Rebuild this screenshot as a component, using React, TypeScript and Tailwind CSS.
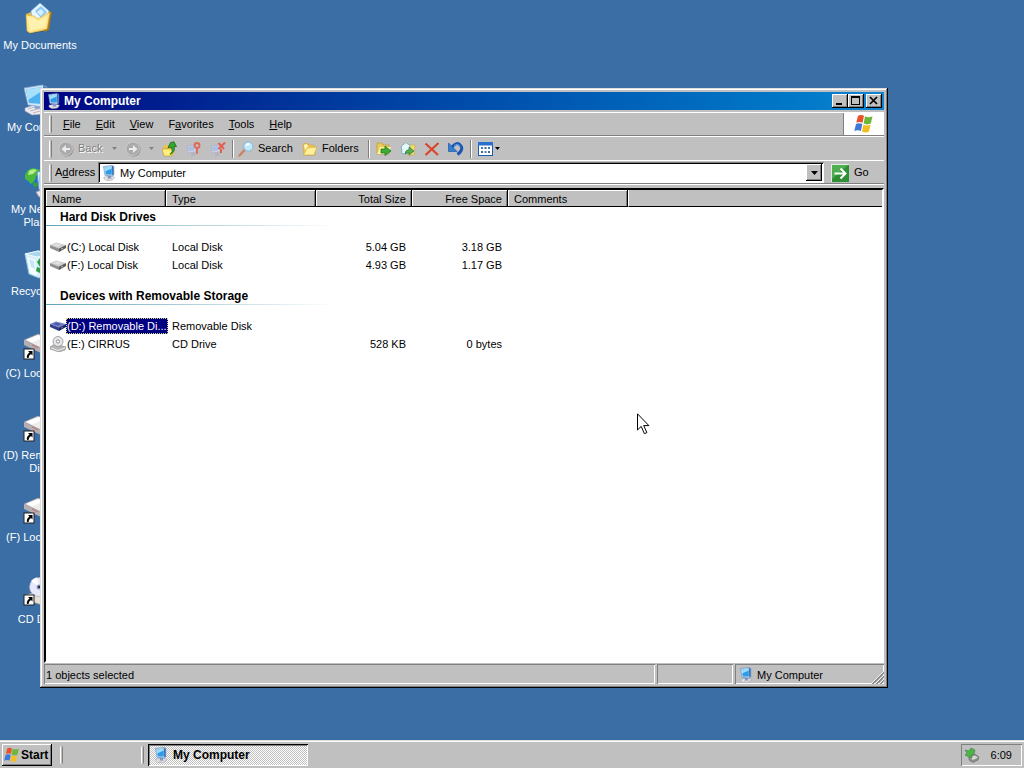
import React from "react";

const RAISED =
  "bg-[#c0c0c0] shadow-[inset_-1px_-1px_0_#000,inset_1px_1px_0_#fff,inset_-2px_-2px_0_#808080]";
const SUNKEN =
  "shadow-[inset_1px_1px_0_#808080,inset_-1px_-1px_0_#fff]";

type IconProps = { className?: string };

function ComputerIcon({ className = "size-4" }: IconProps) {
  return (
    <svg viewBox="0 0 16 16" className={`shrink-0 ${className}`} aria-hidden="true">
      <path d="M3 12.2 9 11l4.500 1.200L11.500 15 6 15.800 3 14z" fill="#e4e4ea" stroke="#9a9aae" strokeWidth=".5" />
      <path d="M6 14.200l5-1" stroke="#b98f96" strokeWidth=".6" />
      <path d="M6.500 10h3.500v3l-3 .5z" fill="#7c9cc4" />
      <path d="M2.500 1.500 11 .5l1.800 1v8.500l-1.500 1L4 10.500z" fill="#c9dff2" stroke="#5f86b5" strokeWidth=".6" />
      <path d="M3.600 2.400 10.800 1.600v7.800L4.900 9.600z" fill="#2f9ae8" />
      <path d="M3.600 2.400 10.800 1.600v2L4 6.500z" fill="#9cdcfb" />
      <path d="M11 .8l1.700.9v8l-1.500.9z" fill="#3a6fae" />
    </svg>
  );
}

function LargeComputerIcon() {
  return (
    <svg viewBox="0 0 32 32" className="size-8" aria-hidden="true">
      <path d="M1 24l12-4 14 3-7 7-12 1-7-4z" fill="#ecebf1" stroke="#a5a5b8" strokeWidth=".6" />
      <path d="M4 25l10-3M6 27l12-3M9 29l11-3" stroke="#bcaab4" strokeWidth=".9" />
      <path d="M10 20h9v4l-8 1z" fill="#7fa3ca" />
      <path d="M0 4 18 1l5 2v17l-4 3L4 21z" fill="#cfe5f6" stroke="#80a7cf" strokeWidth=".7" />
      <path d="M2 5.500 18 3v17L5 19z" fill="#4fb2f0" />
      <path d="M2 5.500 18 3v4L4 16z" fill="#a8e0fb" />
      <path d="M19 1.500l4 1.700V20l-4 2.500z" fill="#4f83bd" />
    </svg>
  );
}

function DocumentsIcon() {
  return (
    <svg viewBox="0 0 32 32" className="size-8" aria-hidden="true">
      <path d="M3 12l4-2 2 1 18-1 1 3-4 16-18 3-2-2z" fill="#35556d" opacity=".45" />
      <path d="M2 12l5-2 3 1 15 1-1 16-19 3z" fill="#e5b93f" />
      <path d="M7 9 16 1l9 8 2 3-9 9-10-5z" fill="#e6f5ff" stroke="#7fb5df" strokeWidth=".7" />
      <path d="M11 9l6-5 6 6-6 6z" fill="#8ccaf4" />
      <path d="M13 10l4-3 3 3-3 4z" fill="#d5f0ff" />
      <path d="M25 9l3 1-3 18-5 2 1-13z" fill="#a57a1c" />
      <path d="M2 13l8 1 4 3 12-7-3 17-17 4-3-2z" fill="#ffe68c" stroke="#d9ad3c" strokeWidth=".6" />
      <path d="M4 15l6 1 4 3 9-5-2 11-15 4z" fill="#fff1ae" />
    </svg>
  );
}

function NetworkIcon() {
  return (
    <svg viewBox="0 0 32 32" className="size-8" aria-hidden="true">
      <circle cx="10" cy="11" r="9.500" fill="#2770c4" />
      <path d="M1 9Q3 3 9 2l8 2v4l-5 2-1 4-4 4-3-3-3-2z" fill="#49b83b" />
      <path d="M5 5q4-3 8-1l-4 4-5 1z" fill="#b8ec8c" />
      <path d="M8 16l5 1 1 3-4 1z" fill="#37a23a" />
      <path d="M13 6 28 4v19l-13 1z" fill="#d7ebfa" stroke="#6a93c2" />
      <path d="M15 8l11-1v13l-10 1z" fill="#3ea6ee" />
      <path d="M15 8l11-1-10 9z" fill="#a9def9" />
      <path d="M12 26l8-3 9 3-4 4-10 1z" fill="#e9e6ee" stroke="#9c9cb4" />
    </svg>
  );
}

function RecycleIcon() {
  return (
    <svg viewBox="0 0 32 32" className="size-8" aria-hidden="true">
      <path d="M1 6 14 3l14 3-5 21-8 3-10-4z" fill="#d9f0f8" stroke="#8fc3dc" />
      <path d="M1 6l12 3 15-3-14-3z" fill="#a5d8ec" stroke="#f2fbff" />
      <path d="M3 9l8 3 2 16-7-3z" fill="#f6fdff" />
      <path d="M5 11l5 2 1 8-4-2z" fill="#c4e8f8" />
      <path d="M13 14l3-4 4 3-2 2 2 3-4 1zM13 19l3 1v5l-4-2z" fill="#2ea043" />
      <path d="M20 15l4 3-3 6-3-3z" fill="#3fb950" />
    </svg>
  );
}

function ShortcutArrow() {
  return (
    <>
      <rect x="0" y="19" width="10" height="10" fill="#fff" stroke="#222" strokeWidth="1" />
      <path d="M4 21h4.500v4.500L7 24Q4.500 25.500 4.500 28H3Q2 25 5.500 22.500z" fill="#000" />
    </>
  );
}

function DriveShortcutIcon() {
  return (
    <svg viewBox="0 0 32 32" className="size-8 overflow-visible" aria-hidden="true">
      <path d="M0 10 14 4l17 5-14 9z" fill="#efecec" stroke="#8c8791" strokeWidth=".6" />
      <path d="M0 10v5l17 8v-5z" fill="#b7aeb2" />
      <path d="M17 18l14-9v5l-14 9z" fill="#817c86" />
      <path d="M3 9.500l11-4 6 2-12 5z" fill="#fff" />
      <path d="M8 15l6 3" stroke="#c0706a" strokeWidth="1" />
      <ShortcutArrow />
    </svg>
  );
}

function DiscShortcutIcon() {
  return (
    <svg viewBox="0 0 32 32" className="size-8 overflow-visible" aria-hidden="true">
      <path d="M2 19l12-4 16 4-12 10-16-5z" fill="#e5e1d4" stroke="#979287" strokeWidth=".6" />
      <path d="M18 24l12-5v4l-12 7z" fill="#a9a498" />
      <circle cx="15" cy="11" r="9.500" fill="#e8e8fb" stroke="#a5a8cc" strokeWidth=".7" />
      <path d="M15 11 7 5a10 10 0 0 1 6-3.500z" fill="#fff" />
      <path d="M15 11l8 5a9.500 9.500 0 0 1-6 4z" fill="#cfc6ee" />
      <circle cx="15" cy="11" r="2.500" fill="#8d9bc2" />
      <circle cx="15" cy="11" r="1.200" fill="#1e2b52" />
      <ShortcutArrow />
    </svg>
  );
}

function FlagIcon({ className = "size-5" }: IconProps) {
  return (
    <svg viewBox="0 0 20 20" className={`shrink-0 ${className}`} aria-hidden="true">
      <path d="M4 1.800Q7 0 10 1.800L8.600 8.800Q5.800 7 2.300 8.800z" fill="#e8542a" />
      <path d="M11 2.300q3.500 1.700 7.500 0L16.800 9.600q-3.800 1.600-7.100 0z" fill="#6cb63a" />
      <path d="M2 10q3.200-1.700 6.300 0L6.900 17q-3-1.700-6.600 0z" fill="#3f78d8" />
      <path d="M9.400 10.600q3.300 1.700 7.200 0L15 17.600q-3.800 1.700-7 0z" fill="#f4bd22" />
    </svg>
  );
}

function RoundArrow({ flip = false }: { flip?: boolean }) {
  return (
    <svg viewBox="0 0 16 16" className="size-4 shrink-0" aria-hidden="true">
      <circle cx="8.500" cy="8.500" r="7" fill="#8c8c8c" />
      <circle cx="7.700" cy="7.700" r="6.800" fill="#aaa" stroke="#d8d8d8" strokeWidth=".7" />
      <path
        d={flip ? "M4 7h4V4l4.500 4L8 12V9H4z" : "M12 7H8V4L3.500 8 8 12V9h4z"}
        fill="#ececec"
      />
    </svg>
  );
}

function UpIcon() {
  return (
    <svg viewBox="0 0 16 16" className="size-4 shrink-0" aria-hidden="true">
      <path d="M1 6l1-2h4l1 2h5v8l-9 1z" fill="#e9c44c" />
      <path d="M0 8h10l1.500 1-2 6H2z" fill="#fff07a" stroke="#b9952b" strokeWidth=".6" />
      <path d="M8 13.500q3.500-3 1.500-7H6L8.500 1.500 12 .8l2.500 4.700h-2.300q1.300 5.500-4.200 8z" fill="#36a52c" stroke="#155f14" strokeWidth=".7" />
    </svg>
  );
}

function MapDriveIcon({ remove = false }: { remove?: boolean }) {
  return (
    <svg viewBox="0 0 16 16" className="size-4 shrink-0" aria-hidden="true">
      <path d="M1 5l9-1v7l-8 1z" fill="#c9cfe0" stroke="#a7abc0" strokeWidth=".6" />
      <path d="M2 6l6-.8v4L3 10z" fill="#a9bfe4" />
      <path d="M5 12h4v3H5z" fill="#b7b3be" />
      {remove ? (
        <path d="M8.500 2l5.500 6m1-6.500L8.500 8M11 8v4" stroke="#e35d4e" strokeWidth="2" />
      ) : (
        <path d="M11 13V7.500M8.500 4.500a2.500 2.500 0 1 0 5 0 2.500 2.500 0 1 0-5 0" fill="none" stroke="#df6958" strokeWidth="1.800" />
      )}
    </svg>
  );
}

function SearchIcon() {
  return (
    <svg viewBox="0 0 16 16" className="size-4 shrink-0" aria-hidden="true">
      <path d="M1.500 14.500 7 8.500" stroke="#c98264" strokeWidth="2.400" strokeLinecap="round" />
      <circle cx="10.300" cy="5.500" r="4.700" fill="#bfe8fb" stroke="#86b5d6" />
      <path d="M7.500 5q.5-3 3.300-3l1 2z" fill="#fff" />
    </svg>
  );
}

function FolderIcon() {
  return (
    <svg viewBox="0 0 16 16" className="size-4 shrink-0" aria-hidden="true">
      <path d="M1 3l4-1 2 2h5l1 3v7H2z" fill="#f0c850" stroke="#c49b32" strokeWidth=".5" />
      <path d="M1.500 14 5 7l10-1-3 8z" fill="#fff09a" stroke="#cfa63b" strokeWidth=".6" />
      <path d="M2 4l2.500-1L6 5.500 3 9z" fill="#fff7be" />
    </svg>
  );
}

function MoveToIcon() {
  return (
    <svg viewBox="0 0 16 16" className="size-4 shrink-0" aria-hidden="true">
      <path d="M1 2h5l1 2h6v9H1z" fill="#eccb50" stroke="#b8912c" strokeWidth=".6" />
      <path d="M1 13 4 6h11l-3 7z" fill="#fff19a" />
      <path d="M5 8h4V5l6 5-6 4.500V12H5z" fill="#3dac36" stroke="#17691b" strokeWidth=".7" />
    </svg>
  );
}

function CopyToIcon() {
  return (
    <svg viewBox="0 0 16 16" className="size-4 shrink-0" aria-hidden="true">
      <path d="M8 4h7l-1 10H8z" fill="#f5dd66" stroke="#c6a23a" strokeWidth=".5" />
      <path d="M1.500 5 6 1.500l4 3V12l-8 1z" fill="#e8f8fa" stroke="#71aab3" strokeWidth=".8" />
      <path d="M5 13q0-4 4-4.500V6l5 4-5 4v-2.500Q7 11.500 5 13z" fill="#55ae50" stroke="#21712a" strokeWidth=".6" />
    </svg>
  );
}

function DeleteIcon() {
  return (
    <svg viewBox="0 0 16 16" className="size-4 shrink-0" aria-hidden="true">
      <path d="M1.500 2.500 14 14M14.500 2 1.500 14" stroke="#d8452c" strokeWidth="2.200" />
    </svg>
  );
}

function UndoIcon() {
  return (
    <svg viewBox="0 0 16 16" className="size-4 shrink-0" aria-hidden="true">
      <path d="M3 7.500Q9-1 13 5q2.500 4-3.500 8.500" fill="none" stroke="#1b55b4" strokeWidth="3" />
      <path d="M.5 2v8.500H9z" fill="#2f7fd8" stroke="#174b9c" strokeWidth=".6" />
      <path d="M6 5q4-3.500 6 .5" fill="none" stroke="#5ba7ef" />
    </svg>
  );
}

function ViewsIcon() {
  return (
    <svg viewBox="0 0 16 16" className="size-4 shrink-0" aria-hidden="true">
      <rect x=".5" y="1.500" width="14" height="13" fill="#fff" stroke="#1d5cb5" />
      <path d="M0 1h15v3.500H0z" fill="#2a6fce" />
      <path d="M3 6h2v2H3zM10 6h2v2h-2zM6.500 10h2v2h-2z" fill="#3579c9" />
      <path d="M6.500 6h2v2h-2zM3 10h2v2H3zM10 10h2v2h-2z" fill="#52657f" />
    </svg>
  );
}

function GoIcon() {
  return (
    <svg viewBox="0 0 18 18" className="size-[18px] shrink-0" aria-hidden="true">
      <rect width="18" height="18" fill="#e2f2e0" />
      <rect x="1" y="1" width="17" height="17" fill="#2f8f35" />
      <path d="M1 1h16L1 15z" fill="#4fae50" />
      <path d="M3.500 9.500h10M9.500 4.500l5 5-5 5" fill="none" stroke="#fff" strokeWidth="2" />
    </svg>
  );
}

function DiskIcon({ selected = false }: { selected?: boolean }) {
  return (
    <svg viewBox="0 0 16 16" className="size-4 shrink-0" aria-hidden="true">
      <path d="M0 6 6 3.500l10 2.500-7 3.500z" fill={selected ? "#7480c8" : "#d0d0d0"} />
      <path d="M0 6v3l9 4V9.500z" fill={selected ? "#333f8b" : "#909090"} />
      <path d="M9 9.500 16 6v3l-7 4z" fill={selected ? "#1c2461" : "#5a5a5a"} />
      <path d="M3 6l3.500-1.300L11 6 8 7.500z" fill={selected ? "#4858a4" : "#e3e3e3"} />
      <path d="M11 10.200l2-1" stroke={selected ? "#6875bb" : "#b8c8b8"} />
    </svg>
  );
}

function DiscIcon() {
  return (
    <svg viewBox="0 0 16 16" className="size-4 shrink-0" aria-hidden="true">
      <path d="M0 11l5-3 11 3-1 3-6 2-9-3z" fill="#b6b6b6" stroke="#777" strokeWidth=".5" />
      <path d="M1 12l7 2.500L15 12" fill="none" stroke="#eee" />
      <circle cx="8" cy="5.500" r="5" fill="#e6e6ea" stroke="#8f8f96" strokeWidth=".8" />
      <circle cx="8" cy="5.500" r="1.600" fill="#fff" stroke="#777" strokeWidth=".8" />
    </svg>
  );
}

function RemoveHardwareIcon() {
  return (
    <svg viewBox="0 0 16 16" className="size-4 shrink-0" aria-hidden="true">
      <path d="M5 10l6-3 4 3-1 3-5 2.500L5 13z" fill="#8b908b" stroke="#555" strokeWidth=".5" />
      <path d="M6 10.500l5-2 3 2-5 2.500z" fill="#d4d8d4" />
      <path d="M1 3l4 1 2-3 4 2-1 4-3 1 1 3-3-1-4-2 2-2z" fill="#4fb248" stroke="#2a7d2c" strokeWidth=".5" />
    </svg>
  );
}

function DownArrow({ muted = false }: { muted?: boolean }) {
  return (
    <svg viewBox="0 0 5 3" className="h-[3px] w-[5px] shrink-0" aria-hidden="true">
      <path d="M0 0h5L2.500 3z" fill={muted ? "#808080" : "#000"} />
    </svg>
  );
}

function Grip() {
  return <div className="h-[18px] w-[3px] shrink-0 border-y border-l border-r border-l-white border-r-[#808080] border-y-[#c0c0c0]" />;
}

function Separator() {
  return <div className="h-[18px] w-[2px] shrink-0 border-l border-r border-l-[#808080] border-r-white" />;
}

const shortcuts: { label: string; icon: React.ReactNode }[] = [
  { label: "My Documents", icon: <DocumentsIcon /> },
  { label: "My Computer", icon: <LargeComputerIcon /> },
  { label: "My Network Places", icon: <NetworkIcon /> },
  { label: "Recycle Bin", icon: <RecycleIcon /> },
  { label: "(C) Local Disk", icon: <DriveShortcutIcon /> },
  { label: "(D) Removable Disk", icon: <DriveShortcutIcon /> },
  { label: "(F) Local Disk", icon: <DriveShortcutIcon /> },
  { label: "CD Drive", icon: <DiscShortcutIcon /> },
];

const menus = [
  ["", "F", "ile"],
  ["", "E", "dit"],
  ["", "V", "iew"],
  ["F", "a", "vorites"],
  ["", "T", "ools"],
  ["", "H", "elp"],
];

type Drive = { name: string; type: string; size: string; free: string; icon: React.ReactNode; selected?: boolean };

const hardDisks: Drive[] = [
  { name: "(C:) Local Disk", type: "Local Disk", size: "5.04 GB", free: "3.18 GB", icon: <DiskIcon /> },
  { name: "(F:) Local Disk", type: "Local Disk", size: "4.93 GB", free: "1.17 GB", icon: <DiskIcon /> },
];

const removable: Drive[] = [
  { name: "(D:) Removable Di...", type: "Removable Disk", size: "", free: "", icon: <DiskIcon selected />, selected: true },
  { name: "(E:) CIRRUS", type: "CD Drive", size: "528 KB", free: "0 bytes", icon: <DiscIcon /> },
];

function GroupRow({ title, first = false }: { title: string; first?: boolean }) {
  return (
    <tr>
      <th colSpan={6} scope="colgroup" className="p-0 pb-3 text-left font-bold">
        <div className={`flex items-end ${first ? "h-[18px]" : "h-[30px]"}`}>
          <span className="pl-[14px] text-[12px] leading-4">{title}</span>
        </div>
        <div className="h-px w-[290px] bg-linear-to-r from-[#5fa3b8] to-white" />
      </th>
    </tr>
  );
}

function DriveRow({ drive }: { drive: Drive }) {
  return (
    <tr className="h-[18px]">
      <td className="p-0 pl-1">
        <div className="flex h-[18px] items-center">
          {drive.icon}
          <span
            className={`h-4 whitespace-nowrap border border-dotted leading-[14px] ${
              drive.selected ? "grow border-[#d8d878] bg-[#000080] text-white" : "border-transparent"
            }`}
          >
            {drive.name}
          </span>
        </div>
      </td>
      <td className="p-0 pl-[6px]">{drive.type}</td>
      <td className="p-0 pr-[6px] text-right">{drive.size}</td>
      <td className="p-0 pr-[6px] text-right">{drive.free}</td>
      <td className="p-0" />
      <td className="p-0" />
    </tr>
  );
}

function DriveTable() {
  const head =
    "h-[17px] bg-[#c0c0c0] p-0 px-[6px] font-normal shadow-[inset_-1px_-1px_0_#000,inset_1px_1px_0_#fff,inset_-2px_0_0_#808080]";
  return (
    <table className="w-full table-fixed border-separate border-spacing-0 text-black">
      <colgroup>
        <col className="w-[120px]" />
        <col className="w-[150px]" />
        <col className="w-[96px]" />
        <col className="w-[96px]" />
        <col className="w-[120px]" />
        <col />
      </colgroup>
      <thead>
        <tr className="leading-4">
          <th className={`${head} text-left`}>Name</th>
          <th className={`${head} text-left`}>Type</th>
          <th className={`${head} text-right`}>Total Size</th>
          <th className={`${head} text-right`}>Free Space</th>
          <th className={`${head} text-left`}>Comments</th>
          <td className="h-[17px] border-b border-l border-b-black border-l-white bg-[#c0c0c0] p-0" />
        </tr>
      </thead>
      <tbody>
        <GroupRow title="Hard Disk Drives" first />
        {hardDisks.map((d) => (
          <DriveRow key={d.name} drive={d} />
        ))}
        <GroupRow title="Devices with Removable Storage" />
        {removable.map((d) => (
          <DriveRow key={d.name} drive={d} />
        ))}
      </tbody>
    </table>
  );
}

function TitleBar() {
  const button = `flex h-[14px] w-4 items-center justify-center ${RAISED}`;
  return (
    <header className="flex h-[18px] shrink-0 items-center bg-linear-to-r from-[#000084] to-[#1084d0] pl-[2px] pr-[2px]">
      <ComputerIcon />
      <h1 className="grow pl-[2px] text-[12px] font-bold text-white">My Computer</h1>
      <button type="button" aria-label="Minimize" className={button}>
        <svg viewBox="0 0 16 14" className="h-[14px] w-4"><path d="M4 9h6v2H4z" /></svg>
      </button>
      <button type="button" aria-label="Maximize" className={button}>
        <svg viewBox="0 0 16 14" className="h-[14px] w-4"><path d="M3 2h9v9H3zM4 4v6h7V4z" fillRule="evenodd" /></svg>
      </button>
      <button type="button" aria-label="Close" className={`ml-[2px] ${button}`}>
        <svg viewBox="0 0 16 14" className="h-[14px] w-4"><path d="M4 3l7 7M11 3l-7 7" stroke="#000" strokeWidth="1.700" /></svg>
      </button>
    </header>
  );
}

function MenuBar() {
  return (
    <nav className="mt-[2px] flex h-6 shrink-0 border-y border-b-[#808080] border-t-white">
      <div className="flex grow items-center border-r border-[#808080] pl-[5px]">
        <Grip />
        <div className="flex gap-px pl-1">
          {menus.map(([before, key, after]) => (
            <button type="button" key={key} className="px-[7px]">
              {before}
              <span className="underline">{key}</span>
              {after}
            </button>
          ))}
        </div>
      </div>
      <div className="flex w-10 items-center justify-center bg-white">
        <FlagIcon />
      </div>
    </nav>
  );
}

function ToolBar() {
  return (
    <div role="toolbar" className="flex h-6 shrink-0 items-center border-t border-white pl-[5px]">
      <Grip />
      <button type="button" disabled className="ml-[6px] flex w-[46px] items-center gap-1 text-[#808080] [text-shadow:1px_1px_0_#fff]">
        <RoundArrow />
        Back
      </button>
      <button type="button" disabled aria-label="Back history" className="ml-2 flex"><DownArrow muted /></button>
      <button type="button" disabled aria-label="Forward" className="ml-2 flex"><RoundArrow flip /></button>
      <button type="button" disabled aria-label="Forward history" className="ml-2 flex"><DownArrow muted /></button>
      <div className="ml-2 flex gap-2">
        <button type="button" aria-label="Up"><UpIcon /></button>
        <button type="button" aria-label="Map network drive"><MapDriveIcon /></button>
        <button type="button" aria-label="Disconnect network drive"><MapDriveIcon remove /></button>
      </div>
      <div className="ml-[6px] flex"><Separator /></div>
      <button type="button" className="ml-1 flex w-[60px] items-center gap-1"><SearchIcon />Search</button>
      <button type="button" className="ml-1 flex w-[60px] items-center gap-1"><FolderIcon />Folders</button>
      <div className="ml-[6px] flex"><Separator /></div>
      <div className="ml-[6px] flex gap-2">
        <button type="button" aria-label="Move to"><MoveToIcon /></button>
        <button type="button" aria-label="Copy to"><CopyToIcon /></button>
        <button type="button" aria-label="Delete"><DeleteIcon /></button>
        <button type="button" aria-label="Undo"><UndoIcon /></button>
      </div>
      <div className="ml-[6px] flex"><Separator /></div>
      <button type="button" aria-label="Views" className="ml-[6px] flex items-center gap-[1px]"><ViewsIcon /><DownArrow /></button>
    </div>
  );
}

function AddressBar() {
  return (
    <div className="flex h-[25px] shrink-0 items-center border-y border-b-white border-t-white pl-[5px] shadow-[inset_0_-1px_0_#808080]">
      <Grip />
      <label htmlFor="address" className="w-[46px] shrink-0 pl-[3px]">
        A<span className="underline">d</span>dress
      </label>
      <div className="flex h-[21px] min-w-0 grow items-center bg-white p-[2px] pl-[3px] shadow-[inset_1px_1px_0_#808080,inset_-1px_-1px_0_#fff,inset_2px_2px_0_#000]">
        <ComputerIcon />
        <input id="address" type="text" defaultValue="My Computer" className="h-4 min-w-0 grow bg-transparent pl-[3px] outline-none" />
        <button type="button" aria-label="Address history" className={`flex h-[17px] w-4 items-center justify-center ${RAISED}`}>
          <svg viewBox="0 0 7 4" className="h-1 w-[7px]" aria-hidden="true"><path d="M0 0h7L3.500 4z" /></svg>
        </button>
      </div>
      <button type="button" className="flex w-[60px] shrink-0 items-center gap-[5px] pl-[7px]">
        <GoIcon />
        Go
      </button>
    </div>
  );
}

function StatusBar() {
  const pane = `flex h-5 items-center pt-[2px] ${SUNKEN}`;
  return (
    <footer className="mt-[1px] flex h-5 shrink-0 gap-[2px]">
      <div className={`${pane} grow pl-[2px]`}>1 objects selected</div>
      <div className={`${pane} w-[76px]`} />
      <div className={`${pane} w-[149px] justify-between pl-[3px]`}>
        <div className="flex items-center gap-[3px]">
          <ComputerIcon />
          My Computer
        </div>
        <svg viewBox="0 0 13 13" className="size-[13px] self-end" aria-hidden="true">
          <path d="M0 13 13 0M4 13l9-9M8 13l5-5" stroke="#fff" />
          <path d="M1 13.500 13.500 1M5 13.500l8.500-8.500M9 13.500l4.500-4.500" stroke="#808080" strokeWidth="1.400" />
        </svg>
      </div>
    </footer>
  );
}

function ExplorerWindow() {
  return (
    <section
      aria-label="My Computer"
      className="absolute bottom-20 left-10 right-[136px] top-[88px] flex flex-col bg-[#c0c0c0] p-1 shadow-[inset_-1px_-1px_0_#000,inset_1px_1px_0_#dcdcdc,inset_-2px_-2px_0_#808080,inset_2px_2px_0_#fff]"
    >
      <TitleBar />
      <MenuBar />
      <ToolBar />
      <AddressBar />
      <main className="mt-[3px] min-h-0 grow overflow-hidden border-2 border-b-white border-l-black border-r-white border-t-black bg-white">
        <DriveTable />
      </main>
      <StatusBar />
    </section>
  );
}

function Taskbar() {
  return (
    <footer className="flex h-7 shrink-0 items-center bg-[#c0c0c0] px-[2px] pt-[2px] shadow-[inset_0_1px_0_#dcdcdc,inset_0_2px_0_#fff]">
      <button type="button" className={`flex h-[22px] w-[50px] items-center gap-[1px] pl-[2px] text-[12px] font-bold ${RAISED}`}>
        <FlagIcon className="size-4" />
        Start
      </button>
      <div className="ml-2 flex grow items-center">
        <Grip />
        <div className="w-[78px]" />
        <Grip />
        <button
          type="button"
          className="ml-1 flex h-[22px] w-40 items-center gap-1 bg-[conic-gradient(#fff_25%,#c0c0c0_0_50%,#fff_0_75%,#c0c0c0_0)] bg-[length:2px_2px] pl-[5px] text-[12px] font-bold shadow-[inset_1px_1px_0_#000,inset_-1px_-1px_0_#fff,inset_2px_2px_0_#808080]"
        >
          <ComputerIcon />
          My Computer
        </button>
      </div>
      <div className={`flex h-[22px] w-[61px] items-center justify-between pl-[3px] pr-[10px] ${SUNKEN}`}>
        <RemoveHardwareIcon />
        <time>6:09</time>
      </div>
    </footer>
  );
}

function Pointer() {
  return (
    <svg viewBox="0 0 13 22" className="pointer-events-none absolute left-[637px] top-[413px] h-[22px] w-[13px]" aria-hidden="true">
      <path d="M.5.800v16.200l3.700-3.600 3.200 7.300 2.500-1.100-3.200-7h5.200z" fill="#fff" stroke="#000" />
    </svg>
  );
}

export default function App() {
  return (
    <div className="relative flex h-screen flex-col overflow-hidden bg-[#3a6ea5] font-['Liberation_Sans',Arial,sans-serif] text-[11px] leading-[13px] text-black">
      <div className="min-h-0 grow overflow-hidden pt-[2px]">
        <ul className="flex w-20 flex-col">
          {shortcuts.map((s) => (
            <li key={s.label} className="h-[82px]">
              <a href="#" className="flex flex-col items-center gap-[5px] text-center text-white">
                {s.icon}
                <span>{s.label}</span>
              </a>
            </li>
          ))}
        </ul>
      </div>
      <ExplorerWindow />
      <Taskbar />
      <Pointer />
    </div>
  );
}
